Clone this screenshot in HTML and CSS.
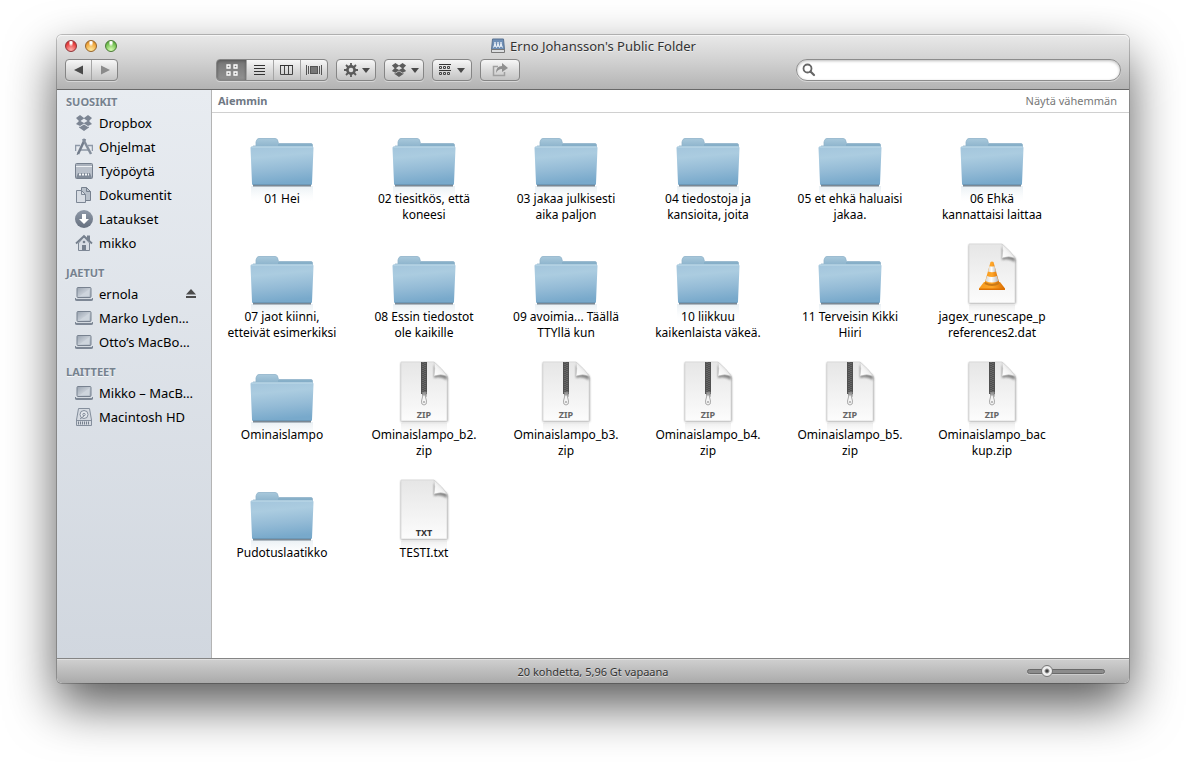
FILE: index.html
```html
<!DOCTYPE html>
<html lang="fi">
<head>
<meta charset="utf-8">
<title>Erno Johansson's Public Folder</title>
<link rel="stylesheet" href="styles.css">
</head>
<body>
<svg class="defs" aria-hidden="true">
  <defs>
    <linearGradient id="gFolder" x1="0" y1="0" x2=".15" y2="1"><stop offset="0" stop-color="#a3c5dc"/><stop offset=".3" stop-color="#abcce0"/><stop offset=".65" stop-color="#94bbd6"/><stop offset="1" stop-color="#78a9cb"/></linearGradient>
    <linearGradient id="gBack" x1="0" y1="0" x2="0" y2="1"><stop offset="0" stop-color="#a8c8db"/><stop offset="1" stop-color="#86aec8"/></linearGradient>
    <linearGradient id="gReflect" x1="0" y1="0" x2="0" y2="1"><stop offset="0" stop-color="#cfdde6" stop-opacity=".45"/><stop offset="1" stop-color="#eaf1f5" stop-opacity="0"/></linearGradient>
    <linearGradient id="gReflectDoc" x1="0" y1="0" x2="0" y2="1"><stop offset="0" stop-color="#d4d4d4" stop-opacity=".4"/><stop offset="1" stop-color="#f0f0f0" stop-opacity="0"/></linearGradient>
    <linearGradient id="gDoc" x1="0" y1="0" x2="0" y2="1"><stop offset="0" stop-color="#e6e6e6"/><stop offset="1" stop-color="#fcfcfc"/></linearGradient>
    <linearGradient id="gCurl" x1="0" y1="1" x2="1" y2="0"><stop offset="0" stop-color="#ffffff"/><stop offset=".4" stop-color="#f4f4f4"/><stop offset="1" stop-color="#b5b5b5"/></linearGradient>
    <linearGradient id="gSide" x1="0" y1="0" x2="0" y2="1"><stop offset="0" stop-color="#8f99a8"/><stop offset="1" stop-color="#66707f"/></linearGradient>
    <linearGradient id="gScreen" x1="0" y1="0" x2="1" y2="1"><stop offset="0" stop-color="#98a2af"/><stop offset=".5" stop-color="#c3cad3"/><stop offset="1" stop-color="#9ea8b5"/></linearGradient>
    <linearGradient id="gCone" x1="0" y1="0" x2="1" y2="0"><stop offset="0" stop-color="#f79a1c"/><stop offset=".5" stop-color="#ffa629"/><stop offset="1" stop-color="#d96c00"/></linearGradient>
    <linearGradient id="gConeWhite" x1="0" y1="0" x2="1" y2="0"><stop offset="0" stop-color="#d5d5d5"/><stop offset=".45" stop-color="#ffffff"/><stop offset="1" stop-color="#b9b9b9"/></linearGradient>
    <filter id="soft" x="-20%" y="-20%" width="140%" height="150%"><feGaussianBlur stdDeviation="1"/></filter>
    <symbol id="folder" viewBox="0 0 64 80">
      <rect x="1" y="62" width="62" height="15" fill="url(#gReflect)"/>
      <rect x="3" y="60" width="58" height="2.500" fill="#4d6070" opacity=".75"/>
      <path d="M6 22V18L7 15.500Q8 14.500 9 14.500H25Q27 14.500 27.500 16L28.500 19.500H61Q62.500 19.500 62.500 21V25H3V22Z" fill="url(#gBack)" stroke="#8fb3c9" stroke-width=".8"/>
      <path d="M28 21H62" stroke="#7ba6c1"/>
      <path d="M1.500 22.500H62.500Q63.500 22.500 63.500 24L62 59.500Q62 61 61 61H3Q2 61 2 59.500L.5 24Q.5 22.500 1.500 22.500Z" fill="url(#gFolder)"/>
      <path d="M1.500 23H62.500" stroke="#c0dbe9"/>
      <path d="M3 60.500H61" stroke="#6c98b7"/>
    </symbol>
    <symbol id="page" viewBox="0 0 64 80">
      <rect x="9" y="63" width="46" height="12" fill="url(#gReflectDoc)"/>
      <path d="M9 3H42L55.500 18V61.500H9Z" fill="#444" opacity=".65" filter="url(#soft)"/>
      <path d="M9 2H42L55 16V61H9Z" fill="url(#gDoc)" stroke="#d8d8d8" stroke-width=".8"/>
      <path d="M42 5V18Q48 16 55 20V16Z" fill="#444" opacity=".6" filter="url(#soft)"/>
      <path d="M42 2Q43.500 8 42 16Q49 13.500 55 16Q51 9 42 2Z" fill="url(#gCurl)" stroke="#cfcfcf" stroke-width=".6"/>
    </symbol>
    <symbol id="zipper" viewBox="0 0 64 80">
      <rect x="29" y="2" width="6" height="32" fill="#505050"/>
      <path d="M31 2V33M33 3V33" stroke="#7c7c7c" stroke-width="1" stroke-dasharray="1 1"/>
      <path d="M30 32H34.500L34 37H31Z" fill="#999" stroke="#777" stroke-width=".6"/>
      <path d="M31 35L29.500 41Q29 45 32 45Q35 45 34.500 41L33 35Z" fill="#f4f4f4" stroke="#aaa"/>
      <circle cx="32" cy="42" r="1" fill="#aaa"/>
    </symbol>
    <symbol id="cone" viewBox="0 0 64 80">
      <path d="M24 40L19 46.500Q19 47.500 20 47.500H44Q45 47.500 45 46.500L40 40Z" fill="url(#gCone)"/>
      <path d="M19 46.500H45V48H19Z" fill="#dc7103"/>
      <path d="M24.500 42Q32 46 39.500 42L38.500 39H25.500Z" fill="#c97a18"/>
      <path d="M30.500 20Q32 19 33.500 20L39 40Q32 44 25 40Z" fill="url(#gCone)"/>
      <path d="M29.500 24Q32 25 34.500 24L36 29.500Q32 31 28 29.500Z" fill="url(#gConeWhite)"/>
      <path d="M27 34Q32 36 37 34L38.500 39Q32 42 25.500 39Z" fill="url(#gConeWhite)"/>
    </symbol>
    <symbol id="laptop" viewBox="0 0 18 18">
      <rect x="2" y="2.500" width="14" height="10" rx="1" fill="url(#gScreen)" stroke="#77818f"/>
      <path d="M4 11.500L14.500 4V11.500Z" fill="#ced5dd"/>
      <path d="M0 13H18V14.500Q18 16 16 16H2Q0 16 0 14.500Z" fill="#7d8795"/>
      <path d="M1 13.500H17" stroke="#d3d9e0"/>
    </symbol>
    <symbol id="dropbox" viewBox="0 0 18 18">
      <path d="M5 1L9 4L13 1L17 4L14 7L17 10L13 12L9 9.500L5 12L1 10L4 7L1 4ZM9 4.500L5.500 7L9 9L12.500 7Z" fill-rule="evenodd"/>
      <path d="M9 10.500L13 13L14 12.500V13.500L9 17L4 13.500V12.500L5 13Z"/>
    </symbol>
    <symbol id="gear" viewBox="0 0 16 16">
      <path d="M8 1V15M1 8H15M3 3L13 13M13 3L3 13" stroke="#5a5a5a" stroke-width="1.800"/>
      <circle cx="8" cy="8" r="3.700" fill="none" stroke="#5a5a5a" stroke-width="2.400"/>
      <circle cx="8" cy="8" r="2.300" fill="#dedede"/>
    </symbol>
  </defs>
</svg>

<main class="window">
  <header class="chrome">
    <div class="titlebar">
      <div class="lights">
        <button class="light red" aria-label="Sulje"></button>
        <button class="light amber" aria-label="Pienennä"></button>
        <button class="light green" aria-label="Zoomaa"></button>
      </div>
      <h1 class="title">
        <svg width="16" height="16" viewBox="0 0 16 16" aria-hidden="true"><path d="M2.500 1H13.500L14.500 12H1.500Z" fill="#6f8fb6" stroke="#5b7391"/><path d="M1.500 11.500H14.500V14.500H1.500Z" fill="#dcdee0" stroke="#777"/><path d="M5 4V9M8 4V9M11 4V9" stroke="#fff" stroke-width="1.200"/><path d="M3.500 9.500L5 6L6.500 9.500L8 6L9.500 9.500L11 6L12.500 9.500" fill="none" stroke="#e9f1f9"/></svg>
        <span>Erno Johansson's Public Folder</span>
      </h1>
    </div>
    <div class="toolbar">
      <div class="group nav">
        <button class="seg" aria-label="Takaisin"><svg width="10" height="10"><path d="M9 .5V9.500L0 5Z" fill="#4a4a4a"/></svg></button>
        <button class="seg" aria-label="Eteenpäin"><svg width="10" height="10"><path d="M1 .5V9.500L10 5Z" fill="#8b8b8b"/></svg></button>
      </div>
      <div class="group views">
        <button class="seg on" aria-label="Kuvakkeet"><svg width="14" height="14"><path d="M2 2H5V5H2ZM9 2H12V5H9ZM2 9H5V12H2ZM9 9H12V12H9Z" fill="#777" stroke="#fff" stroke-width="1.300"/></svg></button>
        <button class="seg" aria-label="Luettelo"><svg width="14" height="14"><path d="M1 2.500H12M1 5.500H12M1 8.500H12M1 11.500H12" stroke="#333"/></svg></button>
        <button class="seg" aria-label="Sarakkeet"><svg width="14" height="14"><path d="M.5 2.500H12.500V11.500H.5ZM4.500 3V11M8.500 3V11" fill="none" stroke="#444"/><path d="M0 2.500H13" stroke="#333"/></svg></button>
        <button class="seg" aria-label="Cover Flow"><svg width="16" height="14"><path d="M.5 2V12M2.500 3V11M13.500 3V11M15.500 2V12" stroke="#555"/><rect x="4.500" y="3.500" width="7" height="7" fill="#777" stroke="#555"/></svg></button>
      </div>
      <button class="tool" aria-label="Toiminto"><svg width="16" height="16"><use href="#gear"/></svg><i class="caret"></i></button>
      <button class="tool" aria-label="Dropbox"><svg width="18" height="16" fill="#5c5c5c"><use href="#dropbox"/></svg><i class="caret"></i></button>
      <button class="tool" aria-label="Järjestä"><svg class="arrange" width="12" height="14"><path d="M0 1.500H12M0 7.500H12" stroke="#333"/><path d="M.5 3.500H2.500V5.500H.5ZM4.500 3.500H6.500V5.500H4.500ZM8.500 3.500H10.500V5.500H8.500ZM.5 9.500H2.500V11.500H.5ZM4.500 9.500H6.500V11.500H4.500ZM8.500 9.500H10.500V11.500H8.500Z" fill="none" stroke="#444"/></svg><i class="caret"></i></button>
      <button class="tool" aria-label="Jaa"><svg width="18" height="16"><path d="M7 4.500H2.500V13.500H13.500V10" fill="none" stroke="#a0a0a0" stroke-width="1.500"/><path d="M5 11Q5 4 11 4V1L17 6L11 10V7Q7 7 5 11Z" fill="#8f8f8f"/></svg></button>
      <label class="search">
        <svg width="16" height="16" aria-hidden="true"><circle cx="6.500" cy="6.500" r="4" fill="none" stroke="#666" stroke-width="1.800"/><path d="M9.500 9.500L13 13" stroke="#666" stroke-width="2.200" stroke-linecap="round"/></svg>
        <input type="search" aria-label="Etsi">
      </label>
    </div>
  </header>

  <div class="body">
    <nav class="sidebar">
      <section>
        <h2>SUOSIKIT</h2>
        <ul>
          <li><svg class="si" fill="#7c8593"><use href="#dropbox"/></svg><span>Dropbox</span></li>
          <li><svg class="si"><path d="M0 7.500H5M13 7.500H18M.5 7.500V13M17.500 7.500V13M4 12H14" stroke="#8e99a8" stroke-width="1.500"/><path d="M10 1L3 16" stroke="#727c8b" stroke-width="2.500"/><path d="M8 1L16 16" stroke="#848e9c" stroke-width="2.500"/><path d="M4 13L2 17" stroke="#727c8b"/></svg><span>Ohjelmat</span></li>
          <li><svg class="si"><rect x=".5" y="1.500" width="17" height="15" rx="1" fill="#b9c0ca" stroke="#76808e"/><path d="M1 4.500H17" stroke="#eef1f4"/><path d="M1 3H17" stroke="#9ba4b0"/><path d="M1 16L3 11H15L17 16Z" fill="#808a98"/><path d="M4 12.500H14" stroke="#f4f6f8" stroke-width="2" stroke-dasharray="2 1"/></svg><span>Työpöytä</span></li>
          <li><svg class="si"><path d="M6.500 1.500H11.500L15.500 5.500V14.500H6.500Z" fill="#b9c1cb" stroke="#76808e"/><path d="M11.500 1.500V5.500H15.500" fill="none" stroke="#76808e"/><path d="M1.500 4.500H6.500L10.500 8.500V16.500H1.500Z" fill="#d8dde4" stroke="#7d8795"/><path d="M6.500 4.500V8.500H10.500" fill="none" stroke="#7d8795"/></svg><span>Dokumentit</span></li>
          <li><svg class="si"><circle cx="9" cy="9" r="9" fill="url(#gSide)"/><path d="M7 4H11V9H14L9 14L4 9H7Z" fill="#fff"/></svg><span>Lataukset</span></li>
          <li><svg class="si"><path d="M12 1.500H15V7H12Z" fill="#76808e"/><path d="M3.500 9V16.500H14.500V9L9 3Z" fill="#d8dde4" stroke="#7d8795"/><path d="M1 9.500L9 2L17 9.500" fill="none" stroke="#76808e" stroke-width="1.800"/><circle cx="9" cy="8" r="1.300" fill="#76808e"/><path d="M7 16V11H11V16Z" fill="#76808e"/></svg><span>mikko</span></li>
        </ul>
      </section>
      <section>
        <h2>JAETUT</h2>
        <ul>
          <li><svg class="si"><use href="#laptop"/></svg><span>ernola</span><button class="eject" aria-label="Poista"><svg width="12" height="10"><path d="M6 0L11 5.500H1ZM1 7H11V9H1Z" fill="#4c4c4c"/></svg></button></li>
          <li><svg class="si"><use href="#laptop"/></svg><span>Marko Lyden…</span></li>
          <li><svg class="si"><use href="#laptop"/></svg><span>Otto’s MacBo…</span></li>
        </ul>
      </section>
      <section>
        <h2>LAITTEET</h2>
        <ul>
          <li><svg class="si"><use href="#laptop"/></svg><span>Mikko – MacB…</span></li>
          <li><svg class="si"><path d="M3.500 .5H14.500L16.500 12V17.500H1.500V12Z" fill="#d5dae1" stroke="#848e9c"/><circle cx="9" cy="6.500" r="4" fill="#e4e8ed" stroke="#848e9c"/><circle cx="9" cy="6.500" r="1.200" fill="none" stroke="#848e9c"/><path d="M9 8L5 11" stroke="#848e9c"/><path d="M2 12.500H16" stroke="#848e9c"/><path d="M3 15H15" stroke="#76808e" stroke-width="3" stroke-dasharray="1 1"/></svg><span>Macintosh HD</span></li>
        </ul>
      </section>
    </nav>

    <section class="content">
      <div class="group-head"><h2>Aiemmin</h2><a href="#">Näytä vähemmän</a></div>
      <ul class="files">
        <li><svg class="icon"><use href="#folder"/></svg><span>01 Hei</span></li>
        <li><svg class="icon"><use href="#folder"/></svg><span>02 tiesitkös, että<br>koneesi</span></li>
        <li><svg class="icon"><use href="#folder"/></svg><span>03 jakaa julkisesti<br>aika paljon</span></li>
        <li><svg class="icon"><use href="#folder"/></svg><span>04 tiedostoja ja<br>kansioita, joita</span></li>
        <li><svg class="icon"><use href="#folder"/></svg><span>05 et ehkä haluaisi<br>jakaa.</span></li>
        <li><svg class="icon"><use href="#folder"/></svg><span>06 Ehkä<br>kannattaisi laittaa</span></li>
        <li><svg class="icon"><use href="#folder"/></svg><span>07 jaot kiinni,<br>etteivät esimerkiksi</span></li>
        <li><svg class="icon"><use href="#folder"/></svg><span>08 Essin tiedostot<br>ole kaikille</span></li>
        <li><svg class="icon"><use href="#folder"/></svg><span>09 avoimia... Täällä<br>TTYllä kun</span></li>
        <li><svg class="icon"><use href="#folder"/></svg><span>10 liikkuu<br>kaikenlaista väkeä.</span></li>
        <li><svg class="icon"><use href="#folder"/></svg><span>11 Terveisin Kikki<br>Hiiri</span></li>
        <li><svg class="icon"><use href="#page"/><use href="#cone"/></svg><span>jagex_runescape_p<br>references2.dat</span></li>
        <li><svg class="icon"><use href="#folder"/></svg><span>Ominaislampo</span></li>
        <li><svg class="icon"><use href="#page"/><use href="#zipper"/><text class="kind" x="32" y="58">ZIP</text></svg><span>Ominaislampo_b2.<br>zip</span></li>
        <li><svg class="icon"><use href="#page"/><use href="#zipper"/><text class="kind" x="32" y="58">ZIP</text></svg><span>Ominaislampo_b3.<br>zip</span></li>
        <li><svg class="icon"><use href="#page"/><use href="#zipper"/><text class="kind" x="32" y="58">ZIP</text></svg><span>Ominaislampo_b4.<br>zip</span></li>
        <li><svg class="icon"><use href="#page"/><use href="#zipper"/><text class="kind" x="32" y="58">ZIP</text></svg><span>Ominaislampo_b5.<br>zip</span></li>
        <li><svg class="icon"><use href="#page"/><use href="#zipper"/><text class="kind" x="32" y="58">ZIP</text></svg><span>Ominaislampo_bac<br>kup.zip</span></li>
        <li><svg class="icon"><use href="#folder"/></svg><span>Pudotuslaatikko</span></li>
        <li><svg class="icon"><use href="#page"/><text class="kind dark" x="32" y="58">TXT</text></svg><span>TESTI.txt</span></li>
      </ul>
    </section>
  </div>

  <footer class="status">
    <p>20 kohdetta, 5,96 Gt vapaana</p>
    <input type="range" class="zoom" min="0" max="100" value="20" aria-label="Kuvakkeiden koko">
  </footer>
</main>
</body>
</html>
```

FILE: styles.css
```css
* { box-sizing: border-box; }

body {
  margin: 0;
  min-height: 100vh;
  padding: 35px 57px 79px;
  display: flex;
  background: #fff;
  color: #000;
  font-family: "Lucida Grande", "Noto Sans", "Open Sans", sans-serif;
  font-size: 12px;
  overflow-x: hidden;
}

h1, h2, p, ul { margin: 0; padding: 0; }
ul { list-style: none; }
button { border: 0; padding: 0; margin: 0; background: none; font: inherit; }
.defs { position: absolute; width: 0; height: 0; }

.window {
  flex: 1;
  min-width: 0;
  display: flex;
  flex-direction: column;
  border-radius: 5px;
  background: #fff;
  box-shadow: 0 0 0 1px rgba(0, 0, 0, .22), 0 22px 50px rgba(0, 0, 0, .66);
}

/* Title bar and toolbar */
.chrome {
  border-radius: 5px 5px 0 0;
  border-bottom: 1px solid #686868;
  background: linear-gradient(#e9e9e9, #d0d0d0 50%, #b3b3b3);
  box-shadow: inset 0 1px #f6f6f6;
  padding: 0 8px 8px;
}

.titlebar {
  height: 24px;
  padding-bottom: 2px;
  display: grid;
  grid-template-columns: 1fr auto 1fr;
  align-items: center;
}

.lights { display: flex; gap: 8px; }

.light {
  width: 12px;
  height: 12px;
  border-radius: 50%;
  border: 1px solid;
}
.red { border-color: #8f3438; background: radial-gradient(ellipse at 50% 15%, #fff 0 12%, transparent 35%), radial-gradient(circle at 50% 90%, #ffb3ae, #e8403f 65%, #b52a30); }
.amber { border-color: #96642a; background: radial-gradient(ellipse at 50% 15%, #fff 0 12%, transparent 35%), radial-gradient(circle at 50% 90%, #ffeaa0, #f0a63c 65%, #b87522); }
.green { border-color: #4a7a35; background: radial-gradient(ellipse at 50% 15%, #fff 0 12%, transparent 35%), radial-gradient(circle at 50% 90%, #d9ffb5, #74c152 65%, #4a8b34); }

.title {
  display: flex;
  align-items: center;
  gap: 4px;
  font-size: 13px;
  line-height: 18px;
  font-weight: 400;
  color: #333;
  white-space: nowrap;
  text-shadow: 0 1px #eee;
}

.toolbar { display: flex; align-items: center; gap: 8px; }

.group, .tool {
  height: 22px;
  display: flex;
  border: 1px solid #858585;
  border-radius: 4px;
  background: linear-gradient(#f7f7f7, #dcdcdc 50%, #c4c4c4);
  box-shadow: 0 1px rgba(255, 255, 255, .4);
}
.tool { width: 40px; align-items: center; justify-content: center; gap: 3px; flex: none; }

.seg { flex: 1; display: flex; align-items: center; justify-content: center; }
.seg + .seg { border-left: 1px solid #a5a5a5; }
.nav { width: 53px; margin-right: 90px; }
.views { width: 112px; }
.seg.on { flex: none; width: 29px; border-radius: 3px 0 0 3px; background: linear-gradient(#757575, #929292); box-shadow: inset 0 1px 3px #555; }

.caret { border: 4px solid transparent; border-top: 5px solid #4a4a4a; border-bottom: 0; }

.arrange { margin-right: 3px; }

.search {
  width: 325px;
  height: 22px;
  margin-left: auto;
  padding: 0 4px;
  display: flex;
  align-items: center;
  gap: 4px;
  border: 1px solid #8c8c8c;
  border-radius: 11px;
  background: #fff;
  box-shadow: inset 0 1px 3px #bbb, 0 1px rgba(255, 255, 255, .4);
}
.search input {
  flex: 1;
  min-width: 0;
  border: 0;
  outline: 0;
  background: none;
  font: inherit;
}

/* Sidebar */
.body { flex: 1; display: flex; }

.sidebar {
  flex: none;
  width: 155px;
  padding: 3px 14px 12px 9px;
  display: flex;
  flex-direction: column;
  gap: 9px;
  border-right: 1px solid #b4b4b4;
  background: linear-gradient(#e8ecf1, #d1d7df);
}
.sidebar h2 {
  font-size: 11px;
  line-height: 18px;
  font-weight: 700;
  color: #76828f;
  text-shadow: 0 1px #f4f6f8;
}
.sidebar li {
  height: 24px;
  padding-left: 9px;
  display: flex;
  align-items: center;
  gap: 6px;
  font-size: 13px;
  white-space: nowrap;
}
.si { width: 18px; height: 18px; flex: none; }
.eject { display: flex; margin-left: auto; }

/* Files */
.content { flex: 1; min-width: 0; background: #fff; }

.group-head {
  height: 23px;
  padding: 0 12px 2px 6px;
  display: flex;
  align-items: center;
  justify-content: space-between;
  border-bottom: 1px solid #d0d0d0;
  font-size: 11px;
}
.group-head h2 { font-size: 11px; color: #6f7884; }
.group-head a { color: #777; text-decoration: none; }

.files {
  padding-top: 11px;
  display: grid;
  grid-template-columns: repeat(auto-fill, 142px);
  grid-auto-rows: 118px;
}
.files li {
  padding-right: 2px;
  display: flex;
  flex-direction: column;
  align-items: center;
  gap: 3px;
  line-height: 16px;
  text-align: center;
  white-space: nowrap;
}
.icon { width: 64px; height: 80px; margin-bottom: -16px; flex: none; }
.files span { position: relative; }
.kind { font-size: 9px; font-weight: 700; text-anchor: middle; fill: #666; }
.kind.dark { fill: #333; }

/* Status bar */
.status {
  height: 25px;
  padding: 0 24px;
  display: grid;
  grid-template-columns: 1fr auto 1fr;
  align-items: center;
  border-top: 1px solid #858585;
  border-radius: 0 0 5px 5px;
  background: linear-gradient(#d0d0d0, #aaa);
  box-shadow: inset 0 1px #e0e0e0;
  font-size: 11px;
  color: #333;
}
.status p { grid-column: 2; text-shadow: 0 1px #ddd; }

.zoom {
  appearance: none;
  justify-self: end;
  width: 78px;
  height: 12px;
  margin: 0;
  background: none;
}
.zoom::-webkit-slider-runnable-track {
  height: 5px;
  border-radius: 3px;
  border: 1px solid #6a6a6a;
  background: #8c8c8c;
  box-shadow: 0 1px #ccc;
}
.zoom::-webkit-slider-thumb {
  appearance: none;
  width: 12px;
  height: 12px;
  margin-top: -5px;
  border: 1px solid #777;
  border-radius: 50%;
  background: radial-gradient(circle, #444 0 1px, #f4f4f4 3px, #ddd);
}
```
